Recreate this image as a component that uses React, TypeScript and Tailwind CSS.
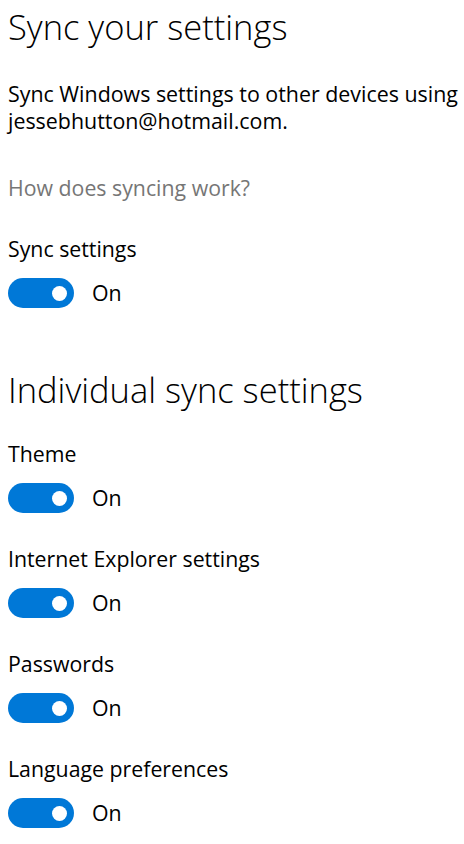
import React from "react";

const items = [
  "Theme",
  "Internet Explorer settings",
  "Passwords",
  "Language preferences",
];

const Toggle: React.FC = () => (
  <div className="flex items-center gap-[18px]">
    <div className="w-[66px] h-[30px] rounded-full bg-[#0078d7] flex items-center justify-end pr-[7px]">
      <div className="w-[15px] h-[15px] rounded-full bg-white" />
    </div>
    <span className="text-[21.3px] leading-[28px]">On</span>
  </div>
);

const Setting: React.FC<{ label: string }> = ({ label }) => (
  <div className="flex flex-col gap-[15px]">
    <div className="text-[21.3px] leading-[28px]">{label}</div>
    <Toggle />
  </div>
);

export default function App() {
  return (
    <div
      className="min-h-[844px] bg-white text-black px-[8px] pt-[6px]"
      style={{ fontFamily: '"Open Sans", "Noto Sans", sans-serif' }}
    >
      <h1 className="text-[34.5px] leading-[42px] font-light">Sync your settings</h1>
      <p className="mt-[32px] text-[21.4px] leading-[27px] whitespace-nowrap">
        Sync Windows settings to other devices using
        <br />
        jessebhutton@hotmail.com.
      </p>
      <div className="mt-[40px] text-[21.3px] leading-[28px] text-[#767676]">
        How does syncing work?
      </div>
      <div className="mt-[33px]">
        <Setting label="Sync settings" />
      </div>
      <h2 className="mt-[62px] text-[34.5px] leading-[40px] font-light">
        Individual sync settings
      </h2>
      <div className="mt-[30px] flex flex-col gap-[32px]">
        {items.map((label) => (
          <Setting key={label} label={label} />
        ))}
      </div>
    </div>
  );
}
